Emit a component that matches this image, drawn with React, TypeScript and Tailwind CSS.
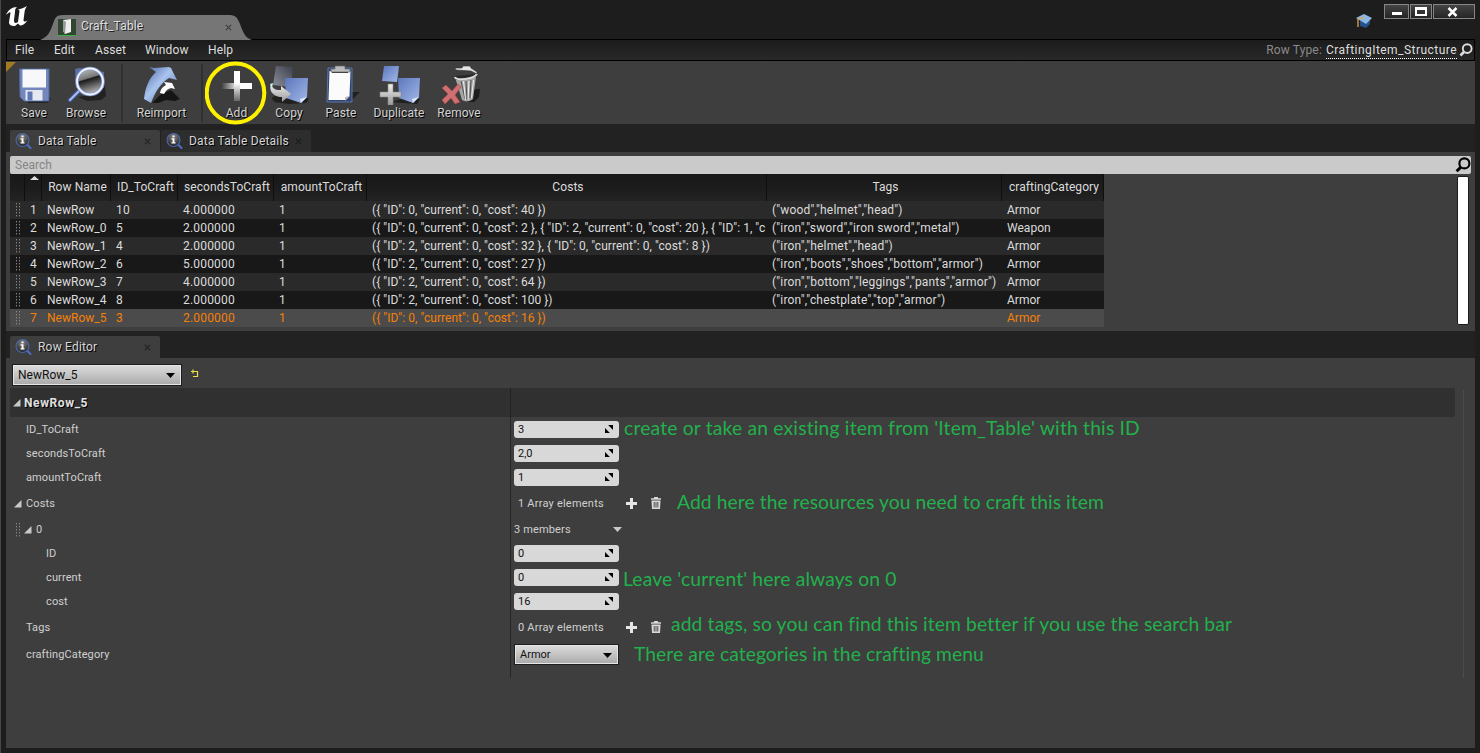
import React from 'react';

const InfoIcon = () => (
  <svg width="18" height="18" viewBox="0 0 18 18" className="mr-[1px] ml-[-1px] shrink-0">
    <defs>
      <radialGradient id="lens" cx="50%" cy="25%" r="80%">
        <stop offset="0" stopColor="#858585" />
        <stop offset="1" stopColor="#1a1a1a" />
      </radialGradient>
    </defs>
    <path d="M12.500 12l4 4" stroke="#4c6fc4" strokeWidth="2" strokeLinecap="round" />
    <circle cx="8.500" cy="8" r="6.5" fill="url(#lens)" stroke="#4a67ad" strokeWidth="1.1" />
    <path d="M7.500 3.500h2v1.700h-2zM6.500 6.300h3v4h1v1.300h-4v-1.300h1.100V7.600h-1.100z" fill="#fff" />
  </svg>
);

const CloseX = ({ color }: { color: string }) => (
  <svg width="7" height="7" viewBox="0 0 8 8"><path d="M1 1l6 6M7 1L1 7" stroke={color} strokeWidth="1.2" /></svg>
);

const Grip = ({ rows = 5 }: { rows?: number }) => (
  <svg width="5" height={rows * 3} viewBox={`0 0 5 ${rows * 3}`} className="shrink-0">
    {Array.from({ length: rows }, (_, i) => (
      <g key={i} fill="#858585">
        <rect x="0" y={i * 3} width="1" height="1.4" />
        <rect x="3" y={i * 3} width="1" height="1.4" />
      </g>
    ))}
  </svg>
);

const SearchGlyph = ({ color, size }: { color: string; size: number }) => (
  <svg width={size} height={size} viewBox="0 0 15 15">
    <circle cx="8.8" cy="6" r="4.7" fill="none" stroke={color} strokeWidth="2" />
    <path d="M5.3 9.7L1.5 13.4" stroke={color} strokeWidth="2.8" />
  </svg>
);

const Caret = ({ color }: { color: string }) => (
  <svg width="9" height="5" viewBox="0 0 9 5" className="shrink-0"><path d="M0 0h9L4.500 5z" fill={color} /></svg>
);

const Expander = () => (
  <svg width="8" height="8" viewBox="0 0 8 8" className="mr-[-1px] shrink-0"><path d="M7.500 0v7.500H0z" fill="#c8c8c8" /></svg>
);

const SaveIcon = () => (
  <svg width="36" height="38" viewBox="0 0 36 38">
    <path d="M26 24l8 9-3 4H10z" fill="#1c1c1c" opacity=".8" />
    <path d="M2.500 3h29.500v32H7l-4-4z" fill="#7387bd" stroke="#4d62a0" />
    <path d="M5.500 3.500h23.500v18h-23.500z" fill="#f8f8fb" />
    <path d="M8.500 24h17v10.500h-17z" fill="#e6e9f0" />
    <path d="M10.500 25.500h5v9h-5z" fill="#5f79b8" />
  </svg>
);

const BrowseIcon = () => (
  <svg width="42" height="38" viewBox="0 0 42 38">
    <defs>
      <linearGradient id="glass" x1="0" y1="0" x2="0.300" y2="1">
        <stop offset="0" stopColor="#ccc" />
        <stop offset=".45" stopColor="#777" />
        <stop offset=".5" stopColor="#1a1a1a" />
        <stop offset="1" stopColor="#aaa" />
      </linearGradient>
    </defs>
    <path d="M12 31l18-3 9-8 1 10-5 4-14 1z" fill="#222" />
    <path d="M9 3l5-1 24 4v16H10z" fill="#5a6fa8" />
    <path d="M14 24L4 34" stroke="#3f5795" strokeWidth="4.500" strokeLinecap="round" />
    <path d="M14 24L4 34" stroke="#a9bbea" strokeWidth="2.2" strokeLinecap="round" />
    <circle cx="24" cy="15.500" r="13" fill="url(#glass)" stroke="#7f97d0" strokeWidth="3.5" />
    <circle cx="24" cy="15.500" r="13" fill="none" stroke="#f4f6ff" strokeWidth="1.8" />
  </svg>
);

const ReimportIcon = () => (
  <svg width="38" height="38" viewBox="0 0 38 38">
    <defs>
      <linearGradient id="reim" x1="0" y1="0" x2="1" y2="1">
        <stop offset="0" stopColor="#4c66a6" />
        <stop offset=".45" stopColor="#a9c4ee" />
        <stop offset="1" stopColor="#4c69aa" />
      </linearGradient>
    </defs>
    <path d="M9 37l9-9 10-4 9 9-5 2-9-1-8 3z" fill="#151515" />
    <path d="M6 1l5 1 15-1 2 1 6 12-8-2C18 17 12 26 8 37l-7-4C2 22 6 12 13 6z" fill="url(#reim)" />
    <path d="M21 16l8 1 3 6-4-1c-4 1-5 3-7 6l-4-1c1-5 3-6 6-8z" fill="#fff" />
  </svg>
);

const AddIcon = () => (
  <svg width="32" height="34" viewBox="0 0 32 34">
    <defs>
      <linearGradient id="plus" x1="0" y1="0" x2="1" y2="0">
        <stop offset="0" stopColor="#444" />
        <stop offset=".5" stopColor="#eee" />
        <stop offset=".6" stopColor="#fff" />
      </linearGradient>
      <linearGradient id="plusv" x1="0" y1="0" x2="0" y2="1">
        <stop offset=".4" stopColor="#fff" />
        <stop offset="1" stopColor="#666" />
      </linearGradient>
    </defs>
    <path d="M1 15h30v6H1z" fill="url(#plus)" />
    <path d="M13 3h6v30h-6z" fill="url(#plusv)" />
  </svg>
);

const BlueDefs = () => (
  <defs>
    <linearGradient id="sheet" x1="0" y1="0" x2="1" y2="1">
      <stop offset="0" stopColor="#5c77bb" />
      <stop offset="1" stopColor="#a4b9ea" />
    </linearGradient>
    <linearGradient id="greysheet" x1="0" y1="1" x2="1" y2="0">
      <stop offset="0" stopColor="#8d8f99" />
      <stop offset="1" stopColor="#3b3f4d" />
    </linearGradient>
    <linearGradient id="metal" x1="0" y1="0" x2="0" y2="1">
      <stop offset="0" stopColor="#eee" />
      <stop offset="1" stopColor="#999" />
    </linearGradient>
  </defs>
);

const CopyIcon = () => (
  <svg width="42" height="40" viewBox="0 0 42 40">
    <BlueDefs />
    <path d="M3 33c3-4 10-2 14 1l18-3 5 3-3 4-18 1C12 37 5 40 3 33z" fill="#202020" />
    <path d="M7 1l17 1-2 20L4 20z" fill="url(#greysheet)" />
    <path d="M16 13h23l-1 19-6 6-15-5z" fill="url(#sheet)" />
    <path d="M38 32l-6 6-1-4z" fill="#dce6ff" />
    <path d="M2 19c2 6 6 6 10 6v-4l10 8-9 8v-5C6 32-1 27 2 19z" fill="url(#metal)" />
    <path d="M1 19l3-1-1 5z" fill="#c9f3ff" />
  </svg>
);

const PasteIcon = () => (
  <svg width="38" height="40" viewBox="0 0 38 40">
    <path d="M26 38l11-11h-9z" fill="#202020" />
    <path d="M5 3h24v34H4z" fill="#32456e" stroke="#5b74ab" />
    <path d="M6.500 6h21l-1 25-4 4H5.500z" fill="#fbfbfb" />
    <path d="M27 31l-5 5v-4z" fill="#bbb" />
    <path d="M12 1h10v3h5v3H8V4h4z" fill="#bbb" stroke="#666" strokeWidth=".7" />
    <path d="M9 7.500h16" stroke="#444" />
  </svg>
);

const DuplicateIcon = () => (
  <svg width="42" height="40" viewBox="0 0 42 40">
    <path d="M12 37l18-5 11 2-3 5z" fill="#202020" />
    <path d="M5 1h15l-2 16L3 16z" fill="url(#sheet)" />
    <path d="M19 13h22l-1 19-6 6-14-5z" fill="url(#sheet)" />
    <path d="M40 32l-6 6-1-4z" fill="#dce6ff" />
    <path d="M9 19h5v8h8v5h-8v8H9v-8H1v-5h8z" fill="url(#metal)" stroke="#888" strokeWidth=".6" />
  </svg>
);

const RemoveIcon = () => (
  <svg width="42" height="40" viewBox="0 0 42 40">
    <path d="M28 37l5-12 8-1-1 8-5 5z" fill="#1c1c1c" />
    <path d="M16 12h21l-3 22c-3 3-8 3-11 1z" fill="#a5a5a5" />
    <path d="M22 16l4 18M27 16l1 19M32 15l-1 18" stroke="#555" strokeWidth="1.1" />
    <path d="M24.500 16l2 19M30 16l-1 19M34.500 15l-2 18" stroke="#eee" strokeWidth="1" />
    <path d="M16 11l1 4 20-3 1-3z" fill="#282828" />
    <path d="M16 12c1 4 19 2 22-3" fill="none" stroke="#ddd" strokeWidth="2" />
    <path d="M16 3l7 0 1-2h7l1 2 6 4v2l-6-3-15-1z" fill="#e4e4e4" stroke="#333" strokeWidth=".6" />
    <path d="M3 23l4-3 6 6 6-7 3 3-6 8 5 7-5 2-4-6-6 6-3-4 6-6z" fill="#cf6f72" stroke="#a84548" strokeWidth=".6" />
  </svg>
);

const Tool = ({ label, w, ls, children }: { label: string; w: string; ls: string; children: React.ReactNode }) => (
  <div className={`flex shrink-0 flex-col items-center ${w}`}>
    <div className="flex h-[42px] items-center justify-center pt-[2px] pl-[1px]">{children}</div>
    <span className={`text-[12px] leading-[16px] text-[#d2d2d2] [text-shadow:1px_1px_0_#000] ${ls}`}>{label}</span>
  </div>
);

const Tab = ({ label, active }: { label: string; active: boolean }) => (
  <div className={`flex h-[22px] w-[150px] items-center rounded-t-[2px] pl-[5px] pr-[9px] ${active ? 'bg-[#3e3e3e]' : 'bg-[#2d2d2d]'}`}>
    <InfoIcon />
    <span className="ml-[5px] text-[12px] leading-[20px] tracking-[0.2px] text-[#d6d6d6] [text-shadow:1px_1px_0_#000]">{label}</span>
    <div className="ml-auto"><CloseX color={active ? '#202020' : '#1a1a1a'} /></div>
  </div>
);

const GRID = 'grid grid-cols-[15px_17px_69px_67px_96px_93px_400px_235px_102px]';
const rows: string[][] = [
  ['1', 'NewRow', '10', '4.000000', '1', '({ "ID": 0, "current": 0, "cost": 40 })', '("wood","helmet","head")', 'Armor'],
  ['2', 'NewRow_0', '5', '2.000000', '1', '({ "ID": 0, "current": 0, "cost": 2 }, { "ID": 2, "current": 0, "cost": 20 }, { "ID": 1, "c', '("iron","sword","iron sword","metal")', 'Weapon'],
  ['3', 'NewRow_1', '4', '2.000000', '1', '({ "ID": 2, "current": 0, "cost": 32 }, { "ID": 0, "current": 0, "cost": 8 })', '("iron","helmet","head")', 'Armor'],
  ['4', 'NewRow_2', '6', '5.000000', '1', '({ "ID": 2, "current": 0, "cost": 27 })', '("iron","boots","shoes","bottom","armor")', 'Armor'],
  ['5', 'NewRow_3', '7', '4.000000', '1', '({ "ID": 2, "current": 0, "cost": 64 })', '("iron","bottom","leggings","pants","armor")', 'Armor'],
  ['6', 'NewRow_4', '8', '2.000000', '1', '({ "ID": 2, "current": 0, "cost": 100 })', '("iron","chestplate","top","armor")', 'Armor'],
  ['7', 'NewRow_5', '3', '2.000000', '1', '({ "ID": 0, "current": 0, "cost": 16 })', '', 'Armor'],
];
const headers = ['', '', 'Row Name', 'ID_ToCraft', 'secondsToCraft', 'amountToCraft', 'Costs', 'Tags', 'craftingCategory'];

const DataTable = () => (
  <div className="w-[1094px] text-[12px] text-[#dcdcdc]">
    <div className={`${GRID} h-[27px] bg-gradient-to-b from-[#181818] via-[#1c1c1c] to-[#232323] tracking-[0.06px]`}>
      {headers.map((h, i) => (
        <div key={i} className="flex items-center justify-center border-r border-[#0e0e0e] pb-[1px] pl-[3px] leading-[14px] whitespace-nowrap">
          {i === 1 ? <svg width="9" height="4" viewBox="0 0 9 4" className="mb-[18px] shrink-0"><path d="M0 4h9L4.500 0z" fill="#ddd" /></svg> : h}
        </div>
      ))}
    </div>
    {rows.map((r, i) => (
      <div key={i} className={`${GRID} h-[18px] items-center ${i === 6 ? 'bg-[#4b4b4b] text-[#f58008]' : i % 2 ? 'bg-[#181818]' : 'bg-[#2a2a2a]'}`}>
        <div className="flex justify-center pl-[2px]"><Grip /></div>
        {r.map((c, j) => (
          <div key={j} className={`pl-[5px] leading-[18px] whitespace-nowrap ${j === 5 ? 'tracking-[0.04px]' : j === 1 ? 'tracking-[0.02px]' : j === 6 ? 'tracking-[0.17px]' : j === 7 ? 'tracking-[0.02px]' : 'tracking-[0.19px]'}`}>{c}</div>
        ))}
      </div>
    ))}
  </div>
);

const NumberBox = ({ v }: { v: string }) => (
  <div className="flex h-[17px] w-[105px] items-center justify-between rounded-[3px] bg-[#d8d8d8] pr-[6px] pl-[4px] text-[11px] text-[#111]">
    <span className="pt-[1px] leading-[16px]">{v}</span>
    <svg width="8" height="8" viewBox="0 0 9 9"><path d="M3.500 0H9v5.500zM0 3.500V9h5.500z" fill="#000" /></svg>
  </div>
);

const ArrayControls = ({ n }: { n: string }) => (
  <div className="flex items-center pl-[4px]">
    <span className="w-[108px] pt-[2px] tracking-[0.22px]">{n} Array elements</span>
    <svg width="11" height="11" viewBox="0 0 11 11"><path d="M4 0h3v4h4v3H7v4H4V7H0V4h4z" fill="#e6e6e6" /></svg>
    <svg width="12" height="12" viewBox="0 0 12 12" className="ml-[13px]">
      <path d="M1 2h10M4 .7h4" stroke="#d8d8d8" strokeWidth="1.400" />
      <path d="M1.500 3.500h9l-.5 8.500h-8z" fill="#d8d8d8" />
      <path d="M4.200 5v5.500M6 5v5.500M7.800 5v5.500" stroke="#3e3e3e" strokeWidth=".9" />
    </svg>
  </div>
);

const Combo = ({ v, cls }: { v: string; cls: string }) => (
  <div className={`flex items-center justify-between border border-[#1d1d1d] bg-gradient-to-b from-[#dedede] to-[#a9a9a9] pr-[6px] pl-[5px] text-[#111] shadow-[inset_0_0_0_1px_#e6e6e6] ${cls}`}>
    <span>{v}</span>
    <Caret color="#000" />
  </div>
);

const Row = ({ h, name, pad, children, note, notePad }: { h: string; name: React.ReactNode; pad: string; children?: React.ReactNode; note?: string; notePad?: string }) => (
  <div className={`flex items-center ${h}`}>
    <div className={`flex h-full w-[501px] shrink-0 items-center border-r border-[#262626] pt-[2px] tracking-[0.12px] ${pad}`}>{name}</div>
    <div className="flex w-[109px] shrink-0 items-center pl-[3px]">{children}</div>
    {note && <div className={`font-[Lato] text-[19.300px] leading-[20px] whitespace-nowrap text-[#22b14c] ${notePad}`}>{note}</div>}
  </div>
);

export default function App() {
  return (
    <div className="flex h-[753px] w-[1480px] flex-col overflow-hidden border-l border-[#484848] bg-[#1d1d1d] pr-[5px] pl-[5px] font-[Roboto,sans-serif] text-[#d0d0d0]">
      <header className="flex h-[39px] shrink-0">
        <svg width="24" height="22" viewBox="0 0 24 22" className="mt-[6px] shrink-0">
          <path d="M0 9C2 4 6 1 11 1 9 3 9 4 9 6L8 14c0 3 1 4 4 2L13.500 5c0-1-1-1.500-2-1.500C15 3 18 2 21 0c-1 2-2 3-2.300 5l-1.200 9c0 2 2 2 4 .5-2 3-5 5-7.500 5l-2-2-3 2.500C5 20 3 19 3 16L4.500 7C4.500 5 2 7 0 9z" fill="#fff" />
        </svg>
        <div className="relative mt-[15px] ml-[10px] flex h-[24px] w-[212px] items-center">
          <svg width="212" height="25" viewBox="0 0 212 25" className="absolute inset-0">
            <path d="M0 25C8 22 10 17 13 9 15 3 16 0 23 0H188C196 0 197 2 200 9 203 17 205 23 212 25z" fill="#767676" />
          </svg>
          <div className="relative ml-[18px] flex h-[17px] w-[18px] items-center justify-center border-b border-[#3faf3f] bg-[#2f4630]">
            <svg width="10" height="15" viewBox="0 0 10 15"><path d="M1 1l8-1v13l-6 2-2-3z" fill="#eee" /><path d="M1 1l3 2-1 12-2-3z" fill="#999" /></svg>
          </div>
          <span className="relative mt-[-2px] ml-[5px] text-[12px] tracking-[0.15px] text-[#dedede] [text-shadow:1px_1px_0_#222]">Craft_Table</span>
          <div className="relative mt-[1px] mr-[20px] ml-auto"><CloseX color="#3d3d3d" /></div>
        </div>
        <svg width="16" height="15" viewBox="0 0 16 15" className="mt-[14px] ml-auto">
          <path d="M4 7v5l6 2 4-4V5z" fill="#25518a" />
          <path d="M0 4L8 0l8 4-6 6z" fill="#8db6e4" />
          <path d="M8 3.500L2 5v8" stroke="#d5a55c" strokeWidth="1.300" fill="none" />
        </svg>
        <div className="mt-[4px] ml-[12px] flex h-[15px] w-[91px] gap-[1px]">
          <div className="flex w-[25px] items-center justify-center border border-[#858585] bg-gradient-to-b from-[#444] to-[#252525]"><div className="mt-[3px] h-[3px] w-[10px] bg-white" /></div>
          <div className="flex w-[22px] items-center justify-center border border-[#858585] bg-gradient-to-b from-[#444] to-[#252525]"><div className="h-[9px] w-[12px] border-2 border-t-3 border-white" /></div>
          <div className="flex flex-1 items-center justify-center border border-[#858585] bg-gradient-to-b from-[#444] to-[#252525] pr-[3px]"><svg width="11" height="10" viewBox="0 0 11 10"><path d="M1.500 1l8 8M9.500 1l-8 8" stroke="#fff" strokeWidth="2.500" /></svg></div>
        </div>
      </header>

      <nav className="flex h-[22px] shrink-0 items-center border border-black bg-gradient-to-b from-[#1c1c1c] to-[#282828] pr-[1px] pl-[8px] text-[12px] tracking-[0.120px] text-[#dedede]">
        <span className="w-[39px]">File</span>
        <span className="w-[41px]">Edit</span>
        <span className="w-[50px]">Asset</span>
        <span className="w-[63px]">Window</span>
        <span>Help</span>
        <span className="mr-[4px] ml-auto tracking-[0.15px] text-[#8a8a8a]">Row Type:</span>
        <span className="mt-[1px] mr-[2px] border-b border-dotted border-white leading-[15px] tracking-[0.46px]">CraftingItem_Structure</span>
        <SearchGlyph color="#ddd" size={14} />
      </nav>

      <div className="relative flex h-[63px] shrink-0 bg-[#3e3e3e] pt-[2px]">
        <svg width="10" height="10" viewBox="0 0 10 10" className="absolute top-[1px] left-0"><path d="M0 0h10L0 10z" fill="#a07b22" /></svg>
        <Tool label="Save" w="w-[56px]" ls="tracking-[0.1px]"><SaveIcon /></Tool>
        <Tool label="Browse" w="w-[48px]" ls="tracking-[0.06px]"><BrowseIcon /></Tool>
        <div className="mt-[1px] ml-[11px] h-[58px] w-[2px] bg-[#303030]" />
        <Tool label="Reimport" w="w-[77px]" ls="tracking-[0.05px]"><ReimportIcon /></Tool>
        <div className="mt-[1px] ml-[1px] h-[58px] w-[2px] bg-[#303030]" />
        <Tool label="Add" w="w-[67px]" ls="tracking-[0.1px]"><AddIcon /></Tool>
        <Tool label="Copy" w="w-[38px]" ls="tracking-[0.1px]"><CopyIcon /></Tool>
        <Tool label="Paste" w="w-[66px]" ls="tracking-[0.1px]"><PasteIcon /></Tool>
        <Tool label="Duplicate" w="w-[50px]" ls="tracking-[0.1px]"><DuplicateIcon /></Tool>
        <Tool label="Remove" w="w-[70px]" ls="tracking-[0.06px]"><RemoveIcon /></Tool>
        <svg width="62" height="64" viewBox="0 0 62 64" className="absolute top-0 left-[199px]"><ellipse cx="30.500" cy="32" rx="28.800" ry="29.500" fill="none" stroke="#fff200" strokeWidth="4" /></svg>
      </div>

      <div className="flex h-[28px] shrink-0 items-end gap-[1px] bg-[#222] pl-[4px]">
        <Tab label="Data Table" active />
        <Tab label="Data Table Details" active={false} />
      </div>
      <section className="h-[179px] shrink-0 bg-[#3e3e3e] px-[4px] pt-[4px]">
        <div className="flex h-[18px] items-center justify-between rounded-[2px] bg-[#cacaca] pl-[5px] text-[12px] text-[#858585]">
          <span>Search</span><SearchGlyph color="#000" size={16} />
        </div>
        <div className="flex justify-between">
          <DataTable />
          <div className="mt-[2px] mr-[2px] h-[149px] w-[12px] rounded-[2px] border border-[#1d1d1d] bg-white" />
        </div>
      </section>

      <div className="flex h-[27px] shrink-0 items-end bg-[#222] pl-[4px]">
        <Tab label="Row Editor" active />
      </div>
      <section className="flex-1 bg-[#3e3e3e] px-[4px] pt-[6px] text-[11px]">
        <div className="flex items-center pl-[2px]">
          <Combo v="NewRow_5" cls="h-[22px] w-[170px] text-[12px] tracking-[0.020px]" />
          <svg width="9" height="9" viewBox="0 0 9 9" className="mb-[3px] ml-[8px]"><path d="M1 2.500h6.500v5H3M3 .5v4" fill="none" stroke="#e6e04a" strokeWidth="1.200" /></svg>
        </div>
        <div className="mt-[2px] flex">
          <div className="w-[1445px]">
            <div className="flex h-[29px] items-center rounded-r-[2px] bg-[#303030]">
              <div className="flex h-full w-[501px] items-center border-r border-[#222] pt-[1px] pl-[3px]">
                <Expander />
                <span className="mt-[-1px] ml-[4px] text-[12px] font-bold tracking-[0.600px] text-[#e0e0e0] [text-shadow:1px_1px_0_#000]">NewRow_5</span>
              </div>
            </div>
            <Row h="h-[24px]" pad="pl-[16px]" name="ID_ToCraft" note="create or take an existing item from 'Item_Table' with this ID" notePad="pl-[4px] pb-[2px] tracking-[0.18px]"><NumberBox v="3" /></Row>
            <Row h="h-[24px]" pad="pl-[16px]" name="secondsToCraft"><NumberBox v="2,0" /></Row>
            <Row h="h-[24px]" pad="pl-[16px]" name="amountToCraft"><NumberBox v="1" /></Row>
            <Row h="h-[28px]" pad="pl-[4px]" name={<><Expander /><span className="ml-[5px]">Costs</span></>} note="Add here the resources you need to craft this item" notePad="pl-[57px] pb-[2px] tracking-[0.07px]"><ArrayControls n="1" /></Row>
            <Row h="h-[24px]" pad="pl-[6px]" name={<><Grip /><span className="w-[3px]" /><Expander /><span className="ml-[5px]">0</span></>}>
              <span className="w-[99px] shrink-0 pt-[2px] tracking-[0.150px]">3 members</span><Caret color="#c8c8c8" />
            </Row>
            <Row h="h-[24px]" pad="pl-[36px]" name="ID"><NumberBox v="0" /></Row>
            <Row h="h-[24px]" pad="pl-[36px]" name="current" note="Leave 'current' here always on 0" notePad="pl-[3px] pt-[3px] tracking-[0.13px]"><NumberBox v="0" /></Row>
            <Row h="h-[24px]" pad="pl-[36px]" name="cost"><NumberBox v="16" /></Row>
            <Row h="h-[28px]" pad="pl-[16px]" name="Tags" note="add tags, so you can find this item better if you use the search bar" notePad="pl-[51px] pb-[7px] tracking-[0.12px]"><ArrayControls n="0" /></Row>
            <Row h="h-[27px]" pad="pl-[16px]" name="craftingCategory" note="There are categories in the crafting menu" notePad="pl-[14px] pb-[2px] tracking-[0.07px]"><Combo v="Armor" cls="h-[21px] w-[105px] pt-[1px]" /></Row>
            <div className="h-[10px] w-[501px] border-r border-[#262626]" />
          </div>
          <div className="mt-[2px] ml-[8px] border-l border-[#4b4b4b]" />
        </div>
      </section>
      <div className="h-[5px] shrink-0" />
    </div>
  );
}
